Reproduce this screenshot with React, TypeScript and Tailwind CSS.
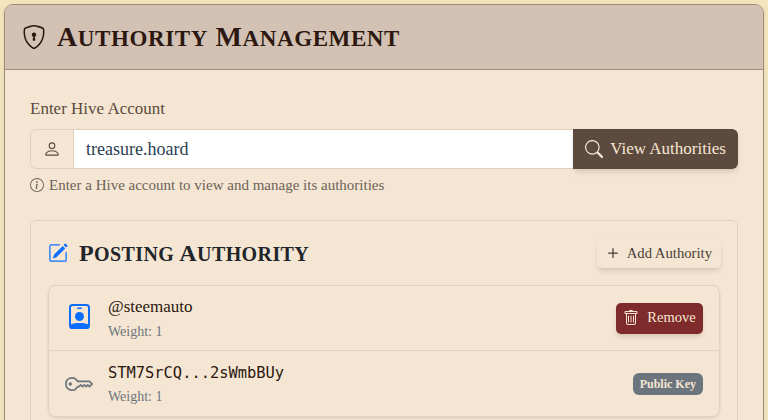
import { BsInfoCircle, BsKey, BsPencilSquare, BsPerson, BsPlus, BsSearch, BsShieldLock, BsTrash } from "react-icons/bs";

const body = "font-['Liberation_Serif',serif]";

// first letter full size, the rest as smaller capitals
function Caps({ text, small }: { text: string; small: string }) {
  return (
    <>
      {text.split(" ").map((word, i) => (
        <span key={word}>
          {i > 0 ? " " : ""}
          {word[0]}
          <span className={`uppercase ${small}`}>{word.slice(1)}</span>
        </span>
      ))}
    </>
  );
}

function BadgeIcon() {
  return (
    <svg className="-mt-[3px]" width="21" height="25" viewBox="0 0 21 25" fill="none">
      <rect x="1" y="1" width="19" height="23" rx="2.5" stroke="#0d6efd" strokeWidth="2" />
      <rect x="8" y="3.500" width="5" height="1.400" rx="0.700" fill="#0d6efd" />
      <circle cx="10.500" cy="12.500" r="4.500" fill="#0d6efd" />
      <path d="M1 21c2-1.500 5-2 9.500-2s7.500.5 9.500 2v2a2 2 0 0 1-2 2h-15a2 2 0 0 1-2-2z" fill="#0d6efd" />
    </svg>
  );
}

function Row({ icon, name, mono, action, last }: { icon: React.ReactNode; name: string; mono?: boolean; action: React.ReactNode; last?: boolean }) {
  return (
    <div className={`flex items-center h-[65px] pl-[16px] pr-[16px] ${last ? "" : "border-b border-[#e3d2c0]"}`}>
      <div className="w-[28px] flex justify-center text-[28px]">{icon}</div>
      <div className="ml-[15px] flex-1 pt-[2px]">
        <div className={mono ? "font-['DejaVu_Sans_Mono',monospace] text-[15.4px] leading-[22px] text-[#2c1810]" : "text-[17px] leading-[20px] text-[#2c1810]"}>{name}</div>
        <div className={`text-[14px] leading-[20px] text-[#6c757d] ${mono ? "mt-[3px]" : "mt-[5px]"}`}>Weight: 1</div>
      </div>
      {action}
    </div>
  );
}

export default function App() {
  return (
    <div className={`h-[420px] overflow-hidden bg-[#f4e4bc] p-[4px] pb-0 ${body}`}>
      <div className="h-[440px] rounded-t-[9px] border border-[#a08c7a] bg-[#f5e6d3] shadow-sm">
        <div className="h-[65px] flex items-center px-[17px] bg-[#d3c2b4] border-b border-[#9c8a7a] rounded-t-[8px]">
          <BsShieldLock className="text-[24px] text-[#2c1810]" />
          <h1 className="ml-[11px] font-bold text-[28px] tracking-[0.6px] text-[#2c1810]">
            <Caps text="Authority Management" small="text-[23px]" />
          </h1>
        </div>
        <div className="px-[25px] pt-[28px]">
          <label className="block text-[17px] leading-[22px] font-medium text-[#5d4a3e]">Enter Hive Account</label>
          <div className="mt-[9px] flex h-[40px]">
            <div className="w-[44px] flex items-center justify-center rounded-l-[6px] border border-[#e0cfbe] bg-[#f5e6d3] text-[#5d4a3e] text-[18px]">
              <BsPerson />
            </div>
            <div className="flex-1 flex items-center bg-white border-y border-[#e0cfbe] pl-[12px] text-[18px] text-[#2c3e50]">treasure.hoard</div>
            <button className="w-[165px] flex items-center justify-center gap-[7px] rounded-r-[6px] bg-[#5d4a3e] text-[#f5e6d3] text-[17px] shadow-md">
              <BsSearch className="text-[18px]" />
              View Authorities
            </button>
          </div>
          <div className="mt-[7px] flex items-center gap-[5px] text-[15px] leading-[18px] text-[#6c6258]">
            <BsInfoCircle className="text-[14px]" />
            Enter a Hive account to view and manage its authorities
          </div>
          <div className="mt-[26px] rounded-[6px] border border-[#e3d2c0] px-[17px] pt-[16px] h-[240px]">
            <div className="flex items-center justify-between h-[32px]">
              <div className="flex items-center">
                <BsPencilSquare className="text-[20px] text-[#0d6efd]" />
                <h2 className="ml-[11px] font-bold text-[24px] tracking-[0.4px] text-[#212529]">
                  <Caps text="Posting Authority" small="text-[20px]" />
                </h2>
              </div>
              <button className="h-[30px] -mr-[1px] flex items-center pl-[6px] pr-[9px] gap-[4px] rounded-[5px] bg-[#f5e6d3] text-[14.7px] text-[#4a4038] shadow-md">
                <BsPlus className="text-[20px]" />
                Add Authority
              </button>
            </div>
            <div className="mt-[16px] rounded-[8px] border border-[#e3d2c0] shadow-sm">
              <Row
                icon={<BadgeIcon />}
                name="@steemauto"
                action={
                  <button className="h-[31px] w-[87px] flex items-center justify-center gap-[8px] rounded-[5px] bg-[#7f2b2b] text-[#f5e6d3] text-[14.5px] shadow-md">
                    <BsTrash className="text-[16px]" />
                    Remove
                  </button>
                }
              />
              <Row
                icon={<BsKey className="text-[#6c757d]" />}
                name="STM7SrCQ...2sWmbBUy"
                mono
                last
                action={<span className="rounded-[6px] bg-[#6c757d] px-[7px] py-[3px] text-[12px] font-bold leading-[16px] text-[#f5e6d3]">Public Key</span>}
              />
            </div>
          </div>
        </div>
      </div>
    </div>
  );
}
